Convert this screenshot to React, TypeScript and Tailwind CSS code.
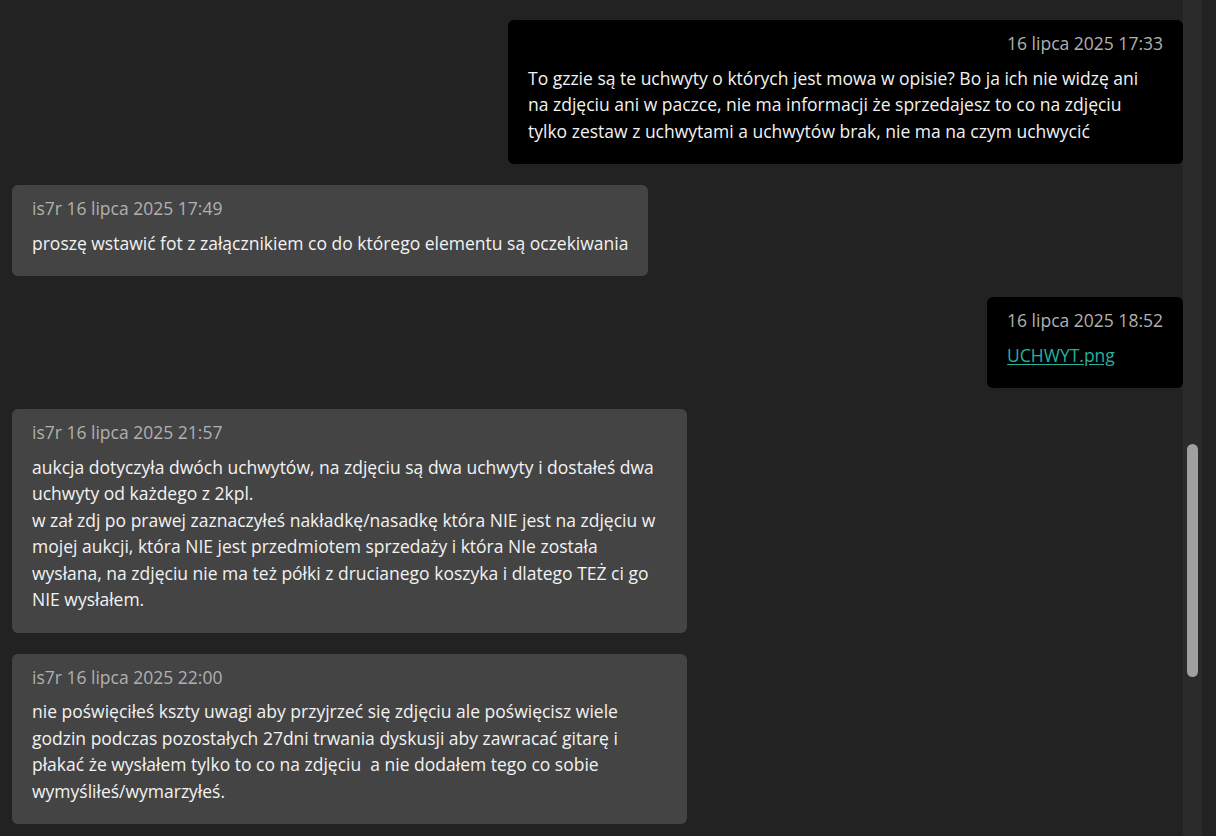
// Message thread: buyer (right, black) vs seller (left, gray), with a static scrollbar on the right.

type Msg = {
    mine: boolean;
    author?: string;
    date: string;
    lines?: string[];
    file?: string;
};

const MESSAGES: Msg[] = [
    {
        mine: true,
        date: '16 lipca 2025 17:33',
        lines: [
            'To gzzie są te uchwyty o których jest mowa w opisie? Bo ja ich nie widzę ani na zdjęciu ani w paczce, nie ma informacji że sprzedajesz to co na zdjęciu tylko zestaw z uchwytami a uchwytów brak, nie ma na czym uchwycić',
        ],
    },
    {
        mine: false,
        author: 'is7r',
        date: '16 lipca 2025 17:49',
        lines: ['proszę wstawić fot z załącznikiem co do którego elementu są oczekiwania'],
    },
    {
        mine: true,
        date: '16 lipca 2025 18:52',
        file: 'UCHWYT.png',
    },
    {
        mine: false,
        author: 'is7r',
        date: '16 lipca 2025 21:57',
        lines: [
            'aukcja dotyczyła dwóch uchwytów, na zdjęciu są dwa uchwyty i dostałeś dwa uchwyty od każdego z 2kpl.',
            'w zał zdj po prawej zaznaczyłeś nakładkę/nasadkę która NIE jest na zdjęciu w mojej aukcji, która NIE jest przedmiotem sprzedaży i która NIe została wysłana, na zdjęciu nie ma też półki z drucianego koszyka i dlatego TEŻ ci go NIE wysłałem.',
        ],
    },
    {
        mine: false,
        author: 'is7r',
        date: '16 lipca 2025 22:00',
        lines: [
            'nie poświęciłeś kszty uwagi aby przyjrzeć się zdjęciu ale poświęcisz wiele godzin podczas pozostałych 27dni trwania dyskusji aby zawracać gitarę i płakać że wysłałem tylko to co na zdjęciu\u00a0 a nie dodałem tego co sobie wymyśliłeś/wymarzyłeś.',
        ],
    },
];

function Bubble({ m }: { m: Msg }) {
    return (
        <div className={`flex ${m.mine ? 'justify-end' : 'justify-start'}`}>
            <div className={`
                max-w-[675px] rounded-md px-5 pt-[10px] pb-[20px]
                ${m.mine ? 'bg-black' : 'bg-[#444444]'}
            `}>
                <div className={`text-[#b0b0b0] mb-[8px] ${m.mine ? 'text-right' : ''}`}>
                    {m.author ? `${m.author} ` : ''}{m.date}
                </div>
                {m.lines?.map((l, i) => (
                    <p key={i} className="text-[#f2f2f2]">{l}</p>
                ))}
                {m.file && (
                    <a href="#" className="text-[#22b2a0] underline underline-offset-2">{m.file}</a>
                )}
            </div>
        </div>
    );
}

export default function App() {
    return (
        <div className="h-[836px] w-[1216px] bg-[#222222] flex overflow-hidden font-['Open_Sans',sans-serif] text-[17.5px] leading-[26.5px]">
            <div className="w-[1183px] pl-3 pt-5 flex flex-col gap-[21px]">
                {MESSAGES.map((m, i) => <Bubble key={i} m={m} />)}
            </div>
            {/* fake scrollbar */}
            <div className="w-[19px] h-full bg-[#2b2b2b] pt-[444px] flex justify-center">
                <div className="w-[11px] h-[233px] rounded-full bg-[#a0a0a0]" />
            </div>
        </div>
    );
}
